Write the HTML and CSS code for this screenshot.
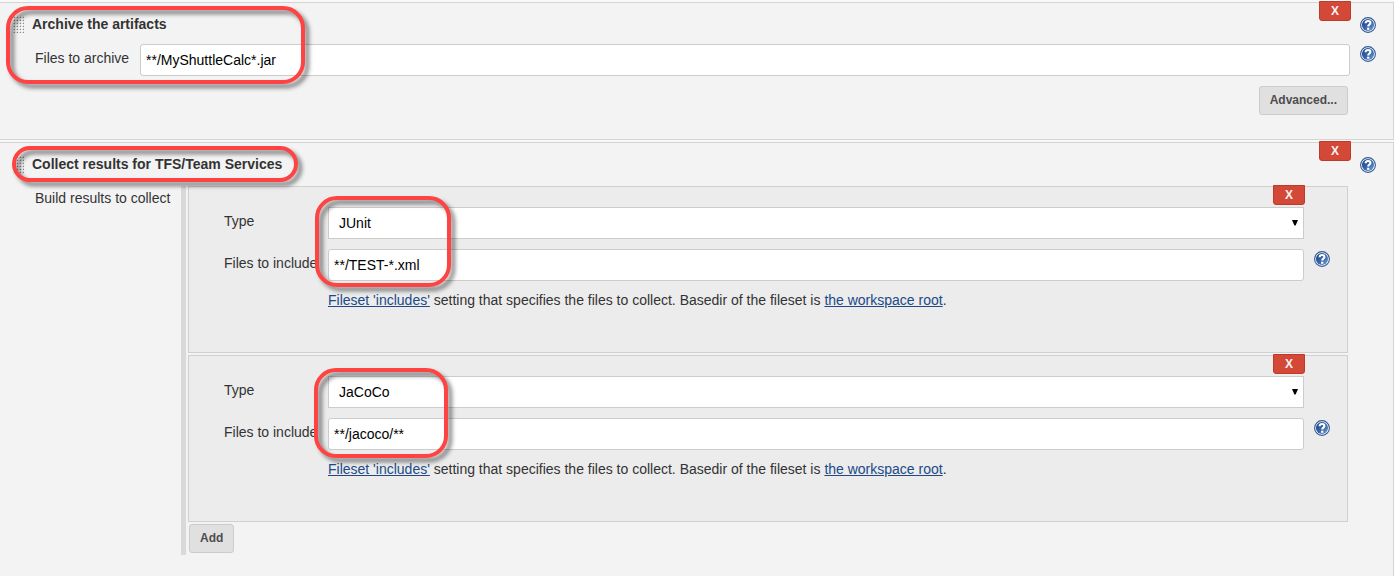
FILE: index.html
```html
<!DOCTYPE html>
<html lang="en">
<head>
<meta charset="utf-8">
<title>Post-build actions</title>
<link rel="stylesheet" href="styles.css">
</head>
<body>
<svg class="defs" aria-hidden="true">
  <defs>
    <linearGradient id="blue" x1="0" y1="0" x2="1" y2="1">
      <stop offset="0" stop-color="#1d4080"/>
      <stop offset="0.5" stop-color="#3564a6"/>
      <stop offset="1" stop-color="#7ba0cf"/>
    </linearGradient>
    <pattern id="dots" width="3" height="3" patternUnits="userSpaceOnUse">
      <rect x="1" y="1" width="1" height="1" fill="#fff"/>
      <rect x="2" y="2" width="1" height="1" fill="#8a8a8a"/>
      <rect x="2" y="1" width="1" height="1" fill="#d8d8d8"/>
      <rect x="1" y="2" width="1" height="1" fill="#d8d8d8"/>
    </pattern>
    <symbol id="grip" viewBox="0 0 13 18">
      <rect width="13" height="18" fill="url(#dots)"/>
    </symbol>
    <symbol id="help" viewBox="0 0 16 16">
      <circle cx="8" cy="8" r="7.4" fill="#fff" stroke="#2f5796" stroke-width="1.1"/>
      <circle cx="8" cy="8" r="6.1" fill="url(#blue)"/>
      <path d="M5.6 6.3C5.6 3.2 10.5 3.2 10.4 6C10.3 7.6 8.2 7.6 8.2 9.6" fill="none" stroke="#fff" stroke-width="2.1"/>
      <rect x="7.1" y="10.7" width="2.2" height="2.1" fill="#fff"/>
    </symbol>
    <symbol id="arrow" viewBox="0 0 6 6">
      <path d="M0 0H6L3.6 5.6H2.4Z" fill="#000"/>
    </symbol>
  </defs>
</svg>
<form class="config">
  <section class="step">
    <button class="delete" type="button">X</button>
    <div class="head">
      <svg class="grip"><use href="#grip"/></svg>
      <h2 class="title">Archive the artifacts</h2>
      <button class="help" type="button" aria-label="Help"><svg><use href="#help"/></svg></button>
    </div>
    <div class="row archive">
      <label class="label" for="archive">Files to archive</label>
      <input class="text" id="archive" type="text" value="**/MyShuttleCalc*.jar">
      <button class="help" type="button" aria-label="Help"><svg><use href="#help"/></svg></button>
    </div>
    <div class="more"><button class="button" type="button">Advanced...</button></div>
    <span class="mark mark-archive"></span>
  </section>

  <section class="step last">
    <button class="delete" type="button">X</button>
    <div class="head">
      <svg class="grip"><use href="#grip"/></svg>
      <h2 class="title">Collect results for TFS/Team Services</h2>
      <button class="help" type="button" aria-label="Help"><svg><use href="#help"/></svg></button>
    </div>
    <div class="results">
      <span class="results-label">Build results to collect</span>
      <div class="list">
        <div class="item">
          <button class="delete" type="button">X</button>
          <div class="row">
            <label class="label" for="type1">Type</label>
            <div class="select-box">
              <select class="select" id="type1"><option>JUnit</option></select>
              <svg class="arrow"><use href="#arrow"/></svg>
            </div>
          </div>
          <div class="row">
            <label class="label" for="files1">Files to include</label>
            <input class="text" id="files1" type="text" value="**/TEST-*.xml">
            <button class="help" type="button" aria-label="Help"><svg><use href="#help"/></svg></button>
          </div>
          <p class="note"><a href="#">Fileset 'includes'</a> setting that specifies the files to collect. Basedir of the fileset is <a href="#">the workspace root</a>.</p>
          <span class="mark mark-junit"></span>
        </div>
        <div class="item">
          <button class="delete" type="button">X</button>
          <div class="row">
            <label class="label" for="type2">Type</label>
            <div class="select-box">
              <select class="select" id="type2"><option>JaCoCo</option></select>
              <svg class="arrow"><use href="#arrow"/></svg>
            </div>
          </div>
          <div class="row">
            <label class="label" for="files2">Files to include</label>
            <input class="text" id="files2" type="text" value="**/jacoco/**">
            <button class="help" type="button" aria-label="Help"><svg><use href="#help"/></svg></button>
          </div>
          <p class="note"><a href="#">Fileset 'includes'</a> setting that specifies the files to collect. Basedir of the fileset is <a href="#">the workspace root</a>.</p>
          <span class="mark mark-jacoco"></span>
        </div>
        <button class="button add" type="button">Add</button>
      </div>
    </div>
    <span class="mark mark-collect"></span>
  </section>
</form>
</body>
</html>
```
FILE: styles.css
```css
* { box-sizing: border-box; }

body {
  margin: 0;
  background: #f8f8f8;
  color: #333;
  font: 14px/20px "Liberation Sans", Arial, sans-serif;
}

.defs { position: absolute; width: 0; height: 0; }

.config {
  display: flex;
  flex-direction: column;
  gap: 2px;
  min-height: 100vh;
  padding-top: 2px;
}

.step {
  position: relative;
  padding: 11px 17px 24px 12px;
  border: 1px solid #d4d4d4;
  border-left: 0;
  background: #f3f3f3;
}

.last { flex: 1; border-bottom: 0; padding-bottom: 20px; }

.head { display: flex; height: 30px; }

.grip {
  flex: none;
  width: 13px;
  height: 18px;
  margin: 1px 7px 0 0;
}

.title { flex: 1; margin: 0; font-size: 14px; line-height: 20px; }

.help {
  flex: none;
  width: 16px;
  height: 16px;
  margin: 2px 0 0;
  padding: 0;
  border: 0;
  background: none;
}

.head .help { margin-top: 3px; }

.help svg { display: block; width: 16px; height: 16px; }

.row { display: flex; }

.row .help { margin-left: 10px; }

.label { flex: none; width: 104px; padding-top: 4px; }

.archive .label { width: 105px; }

.archive { margin-left: 23px; }

.text, .select {
  min-width: 0;
  height: 32px;
  border: 1px solid #ccc;
  background: #fff;
  color: #000;
  font: inherit;
}

.text { flex: 1; padding: 0 5px; border-radius: 3px; }

.select {
  display: block;
  width: 100%;
  padding: 0 10px;
  border-radius: 0;
  appearance: none;
}

.select-box { position: relative; flex: 1; margin-right: 26px; }

.arrow {
  position: absolute;
  top: 13px;
  right: 6px;
  width: 6px;
  height: 6px;
  pointer-events: none;
}

.button {
  height: 29px;
  padding: 0 10px 2px;
  border: 1px solid #ccc;
  border-radius: 3px;
  background: #e0e0e0;
  color: #4d4d4d;
  font: bold 12px/16px "Liberation Sans", Arial, sans-serif;
}

.more { display: flex; justify-content: flex-end; margin: 10px 28px 0 0; }

.delete {
  position: absolute;
  top: -2px;
  right: 42px;
  width: 32px;
  height: 20px;
  padding: 0;
  border: 1px solid #c03a2b;
  border-radius: 0 0 3px 3px;
  background: #d34836;
  color: #f2f2f2;
  font: bold 12px/16px "Liberation Sans", Arial, sans-serif;
}

.results { display: flex; margin: 2px 28px 0 23px; }

.results-label { flex: none; width: 146px; padding-top: 2px; }

.list {
  flex: 1;
  display: flex;
  flex-direction: column;
  gap: 2px;
  padding: 0 0 2px 2px;
  border-left: 5px solid #d9d9d9;
}

.item {
  position: relative;
  display: flex;
  flex-direction: column;
  gap: 10px;
  padding: 20px 17px 42px 35px;
  border: 1px solid #d0d0d0;
  background: #ececec;
}

.note { margin: -1px 0 0 104px; }

.note a { color: #204a87; }

.add { align-self: flex-start; margin-left: 1px; }

/* Highlight outlines drawn over the form */
.mark {
  position: absolute;
  border: 4px solid #ff4242;
  border-radius: 22px;
  filter: drop-shadow(4px 4px 2px rgba(0, 0, 0, 0.5));
  pointer-events: none;
}

.mark-archive { left: 6px; top: 3px; width: 299px; height: 78px; }
.mark-collect { left: 12px; top: 3px; width: 286px; height: 36px; }
.mark-junit { left: 126px; top: 9px; width: 136px; height: 91px; }
.mark-jacoco { left: 125px; top: 12px; width: 134px; height: 90px; }
```
